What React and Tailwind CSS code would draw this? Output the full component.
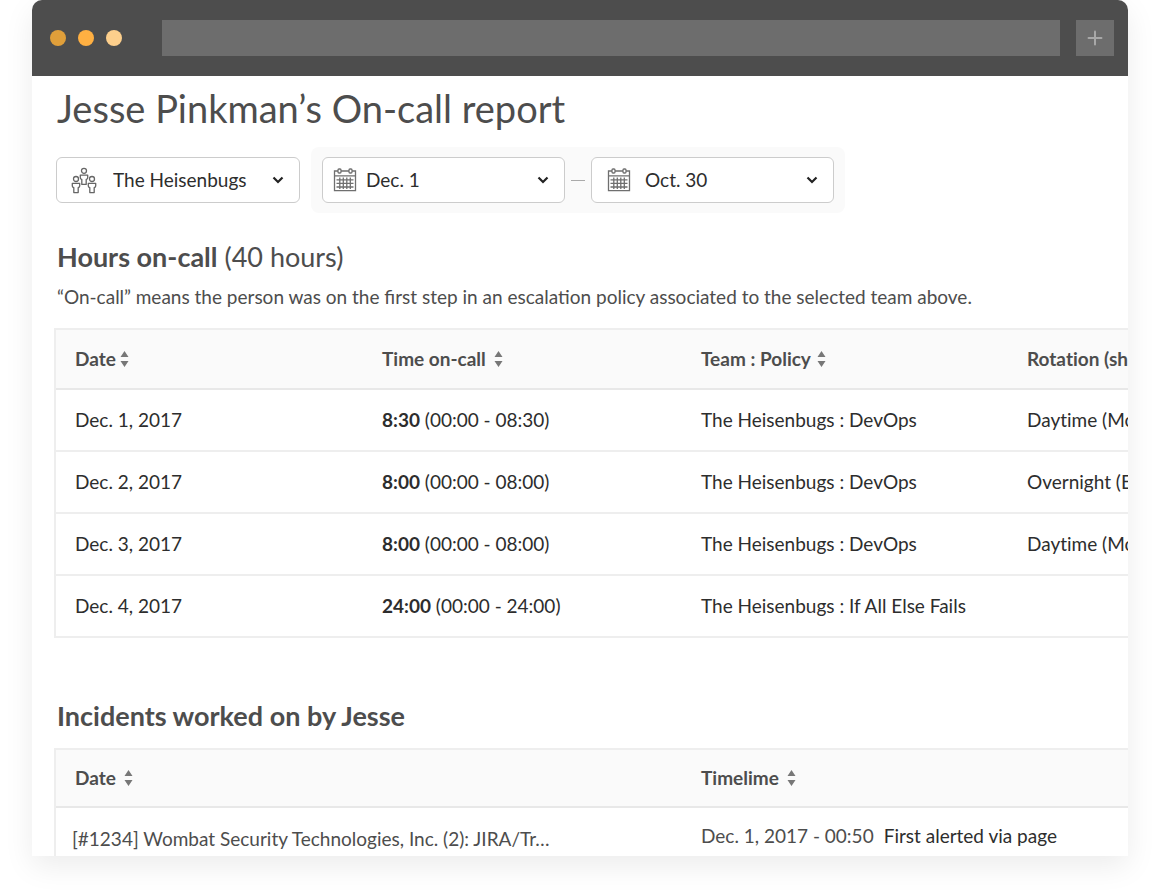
import { Plus } from "lucide-react";

const shifts = [
  { date: "Dec. 1, 2017", total: "8:30", range: "(00:00 - 08:30)", team: "The Heisenbugs : DevOps", rotation: "Daytime (Mon - Fri)" },
  { date: "Dec. 2, 2017", total: "8:00", range: "(00:00 - 08:00)", team: "The Heisenbugs : DevOps", rotation: "Overnight (Every day)" },
  { date: "Dec. 3, 2017", total: "8:00", range: "(00:00 - 08:00)", team: "The Heisenbugs : DevOps", rotation: "Daytime (Mon - Fri)" },
  { date: "Dec. 4, 2017", total: "24:00", range: "(00:00 - 24:00)", team: "The Heisenbugs : If All Else Fails", rotation: "" },
];

const incidents = [
  {
    title: "[#1234] Wombat Security Technologies, Inc. (2): JIRA/Tr…",
    time: "Dec. 1, 2017 - 00:50",
    event: "First alerted via page",
  },
];

function TeamIcon() {
  const person = (
    <>
      <circle cx="4" cy="3" r="2.5" />
      <path d="M.3 7.300h7.400v2.700c0 .8-.5 1.400-1.500 1.600v5H1.800v-5C.8 11.400.3 10.800.3 10z" />
    </>
  );
  return (
    <svg width="26" height="27" viewBox="0 0 26 27" fill="none" stroke="#666" strokeWidth="1.3" strokeLinejoin="round" aria-hidden="true">
      <g transform="translate(9 .8)">{person}</g>
      <g transform="translate(1 9)">{person}</g>
      <g transform="translate(17 9)">{person}</g>
    </svg>
  );
}

function CalendarIcon() {
  return (
    <svg width="24" height="24" viewBox="0 0 24 24" fill="none" stroke="#6f6f6f" strokeWidth="1.3" aria-hidden="true">
      <path d="M5 3H1.500v19.700h21V3H19M8 3h8M1.500 7.800h21" />
      <rect x="5" y="1" width="3" height="4" rx="1" />
      <rect x="16" y="1" width="3" height="4" rx="1" />
      <path d="M3.500 11.800h17M3.500 15.400h17M3.500 19h17M6.800 9.500v11.500M10.300 9.500v11.500M13.800 9.500v11.500M17.300 9.500v11.500" />
    </svg>
  );
}

function Picker({ icon, label, value, className }) {
  return (
    <div className={`relative flex h-[46px] items-center rounded-md border border-[#ccc] bg-white ${className}`}>
      {icon}
      <select
        aria-label={label}
        className="h-full min-w-0 flex-1 appearance-none bg-transparent text-[19px] text-[#2d2d2d] outline-none"
      >
        <option>{value}</option>
      </select>
      <svg
        className="pointer-events-none absolute top-1/2 right-[15px] -translate-y-1/2"
        width="12"
        height="8"
        viewBox="0 0 12 8"
        fill="none"
        stroke="#222"
        strokeWidth="2.2"
        aria-hidden="true"
      >
        <path d="M1.500 1.500 6 6l4.500-4.500" />
      </svg>
    </div>
  );
}

function SortHeader({ children, gap = "gap-2", height = "h-[60px]" }) {
  return (
    <th scope="col" className={`border-b-2 border-[#e8e8e8] bg-[#fafafa] p-0 pl-[19px] text-left font-bold text-[#4d4d4d] ${height}`}>
      <button type="button" className={`flex items-center whitespace-nowrap ${gap}`}>
        {children}
        <svg width="9" height="16" viewBox="0 0 9 16" fill="#777" aria-hidden="true">
          <path d="M4.500 0l4 6h-8zM4.500 16l4-6h-8z" />
        </svg>
      </button>
    </th>
  );
}

export default function App() {
  return (
    <div className="flex h-screen flex-col bg-white px-8 pb-9 font-['Lato',sans-serif]">
      <div className="flex min-h-0 flex-1 flex-col rounded-t-xl shadow-[0_10px_30px_rgba(0,0,0,0.08)]">
        <header className="z-10 flex h-[76px] shrink-0 items-center rounded-t-[10px] bg-[#4d4d4d] pr-[14px] pl-[18px]">
          <div className="flex gap-3">
            <span className="size-4 rounded-full bg-[#e09f3a]" />
            <span className="size-4 rounded-full bg-[#ffb042]" />
            <span className="size-4 rounded-full bg-[#fdcf8c]" />
          </div>
          <input type="text" aria-label="Address" className="ml-10 h-9 min-w-0 flex-1 bg-[#6d6d6d] px-3 text-white outline-none" />
          <button type="button" aria-label="New tab" className="ml-4 flex h-9 w-[38px] items-center justify-center bg-[#6d6d6d]">
            <Plus size={22} color="#a8a8a8" strokeWidth={2} absoluteStrokeWidth />
          </button>
        </header>

        <main className="min-h-0 flex-1 overflow-hidden bg-white pl-[22px] text-[19px] leading-6 text-[#4d4d4d]">
          <h1 className="pt-2 pl-[3px] text-[38px] leading-[48px]">Jesse Pinkman’s On-call report</h1>

          <div className="mt-[15px] flex items-center gap-[11px] pl-[2px]">
            <Picker icon={<span className="mr-4 ml-[14px]"><TeamIcon /></span>} label="Team" value="The Heisenbugs" className="w-[244px]" />
            <div className="flex items-center rounded-lg bg-[#fafafa] px-[11px] py-[10px]">
              <Picker icon={<span className="mr-[9px] ml-[10px]"><CalendarIcon /></span>} label="From" value="Dec. 1" className="w-[243px]" />
              <span className="mx-[6px] h-px w-[14px] bg-[#aaa]" />
              <Picker icon={<span className="mr-[14px] ml-[15px]"><CalendarIcon /></span>} label="To" value="Oct. 30" className="w-[243px]" />
            </div>
          </div>

          <h2 className="mt-7 pl-[3px] text-[27px] leading-8">
            <strong className="font-bold">Hours on-call</strong> (40 hours)
          </h2>
          <p className="mt-3 pl-[3px]">
            “On-call” means the person was on the first step in an escalation policy associated to the selected team above.
          </p>

          <div className="[font-variant-ligatures:no-common-ligatures]">
            <table className="mt-[19px] w-[1400px] table-fixed border-separate border-spacing-0 border-2 border-b-0 border-[#eee] whitespace-nowrap">
              <colgroup>
                <col className="w-[307px]" />
                <col className="w-[319px]" />
                <col className="w-[326px]" />
                <col />
              </colgroup>
              <thead>
                <tr>
                  <SortHeader gap="gap-1">Date</SortHeader>
                  <SortHeader>Time on-call</SortHeader>
                  <SortHeader gap="gap-[6px]">Team : Policy</SortHeader>
                  <SortHeader>Rotation (shift)</SortHeader>
                </tr>
              </thead>
              <tbody className="text-[#2d2d2d]">
                {shifts.map((shift) => (
                  <tr key={shift.date} className="*:h-[62px] *:border-b-2 *:border-[#eee] *:p-0 *:pl-[19px]">
                    <td>{shift.date}</td>
                    <td>
                      <strong className="font-bold">{shift.total}</strong> {shift.range}
                    </td>
                    <td>{shift.team}</td>
                    <td>{shift.rotation}</td>
                  </tr>
                ))}
              </tbody>
            </table>

            <h2 className="mt-[62px] pl-[3px] text-[27px] leading-8 font-bold">Incidents worked on by Jesse</h2>

            <table className="mt-4 w-[1400px] table-fixed border-separate border-spacing-0 border-2 border-[#eee] whitespace-nowrap">
              <colgroup>
                <col className="w-[626px]" />
                <col />
              </colgroup>
              <thead>
                <tr>
                  <SortHeader height="h-[58px]">Date</SortHeader>
                  <SortHeader height="h-[58px]">Timelime</SortHeader>
                </tr>
              </thead>
              <tbody>
                {incidents.map((incident) => (
                  <tr key={incident.title} className="align-top">
                    <td className="pt-[19px] pb-4 pl-4">{incident.title}</td>
                    <td className="pt-4 pb-4 pl-[19px]">
                      {incident.time}
                      <span className="ml-[10px] text-[#2d2d2d]">{incident.event}</span>
                    </td>
                  </tr>
                ))}
              </tbody>
            </table>
          </div>
        </main>
      </div>
    </div>
  );
}
